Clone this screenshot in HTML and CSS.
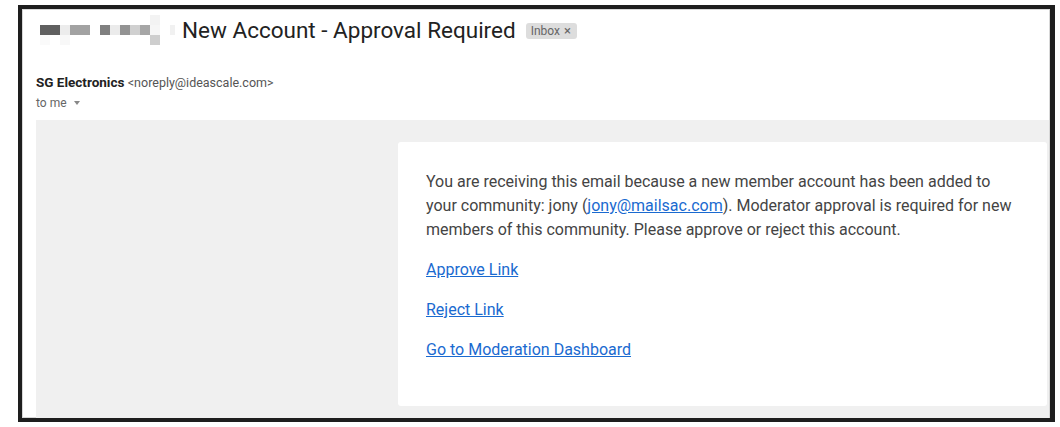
FILE: index.html
```html
<!DOCTYPE html>
<html lang="en">
<head>
    <meta charset="UTF-8">
    <meta name="viewport" content="width=device-width, initial-scale=1.0">
    <title>New Account - Approval Required</title>
    <link rel="stylesheet" href="styles.css">
</head>
<body>
    <div class="frame">
        <div class="subject">
            <div class="mosaic">
                <span></span><span></span><span></span><span></span><span></span><span></span><span></span>
                <span></span><span></span><span></span><span></span><span class="c11r0"></span><span></span><span></span>
                <span class="c0r1"></span><span class="c0r1"></span><span class="c2r1"></span><span class="c3r1"></span><span class="c3r1"></span><span></span><span class="c6r1"></span>
                <span class="c7r1"></span><span class="c8r1"></span><span class="c9r1"></span><span class="c10r1"></span><span class="c11r1"></span><span></span><span class="c13r1"></span>
                <span class="c0r2"></span><span></span><span class="c2r2"></span><span></span><span></span><span></span><span></span>
                <span></span><span></span><span></span><span></span><span class="c11r2"></span><span></span><span></span>
            </div>
            <h1 class="title">New Account - Approval Required</h1>
            <span class="label">Inbox <span class="x">&times;</span></span>
        </div>

        <div class="sender">
            <b>SG Electronics</b> <span class="addr">&lt;noreply@ideascale.com&gt;</span>
        </div>
        <div class="to">to me <span class="caret"></span></div>

        <div class="mail-body">
            <div class="card">
                <p>You are receiving this email because a new member account has been added to your community: jony (<a href="#">jony@mailsac.com</a>). Moderator approval is required for new members of this community. Please approve or reject this account.</p>
                <p><a href="#">Approve Link</a></p>
                <p><a href="#">Reject Link</a></p>
                <p><a href="#">Go to Moderation Dashboard</a></p>
            </div>
        </div>
    </div>
</body>
</html>
```

FILE: styles.css
```css
body {
    margin: 0;
    background: #fff;
    font-family: Roboto, "Liberation Sans", Arial, sans-serif;
    color: #222;
}
.frame {
    box-sizing: border-box;
    width: 1037px;
    height: 417px;
    margin: 5px 0 0 18px;
    border: 4px solid #1e1e1e;
    border-right-width: 5px;
    box-shadow: inset 0 0 0 1px #d8d8d8;
    display: flex;
    flex-direction: column;
    overflow: hidden;
}
.subject {
    display: flex;
    align-items: center;
    height: 42px;
    padding-left: 18px;
}
.mosaic {
    display: grid;
    grid-template-columns: repeat(13, 10px) 5px;
    grid-template-rows: 10px 10px 10px;
}
.mosaic .c11r0 { background: #f3f3f3; }
.mosaic .c0r1 { background: #606060; }
.mosaic .c2r1 { background: #ececec; }
.mosaic .c3r1 { background: #a2a2a2; }
.mosaic .c6r1 { background: #808080; }
.mosaic .c7r1 { background: #ebebeb; }
.mosaic .c8r1 { background: #939393; }
.mosaic .c9r1 { background: #d0d0d0; }
.mosaic .c10r1 { background: #a6a6a6; }
.mosaic .c11r1 { background: #f6f6f6; }
.mosaic .c13r1 { background: #f1f1f1; }
.mosaic .c0r2 { background: #fafafa; }
.mosaic .c2r2 { background: #f8f8f8; }
.mosaic .c11r2 { background: #cecece; }
.title {
    margin: 0 0 0 7px;
    font-size: 22.5px;
    font-weight: 400;
    color: #222;
}
.label {
    margin-left: 10px;
    margin-top: 1px;
    background: #dddddd;
    color: #666;
    font-size: 12px;
    line-height: 16px;
    padding: 0 6px 0 5px;
    border-radius: 3px;
}
.label .x {
    font-size: 13px;
    margin-left: 1px;
}
.sender {
    margin-top: 23px;
    padding-left: 14px;
    font-size: 13.5px;
    line-height: 16px;
}
.sender b {
    font-weight: 700;
}
.sender .addr {
    font-size: 12.5px;
    color: #555;
}
.to {
    margin-top: 5px;
    padding-left: 14px;
    font-size: 12px;
    line-height: 14px;
    color: #666;
}
.caret {
    display: inline-block;
    margin-left: 4px;
    vertical-align: 2px;
    border-left: 3.5px solid transparent;
    border-right: 3.5px solid transparent;
    border-top: 4px solid #888;
}
.mail-body {
    flex: 1;
    margin: 10px 1px 0 14px;
    padding: 22px 2px 12px 362px;
    background: #f0f0f0;
    display: flex;
}
.card {
    flex: 1;
    background: #fff;
    border-radius: 3px;
    padding: 28px 28px 0 28px;
}
.card p {
    max-width: 596px;
    margin: 0 0 16px;
    font-size: 16px;
    line-height: 24px;
    color: #444;
}
.card a {
    color: #1a6ad0;
    text-decoration: underline;
}
```
